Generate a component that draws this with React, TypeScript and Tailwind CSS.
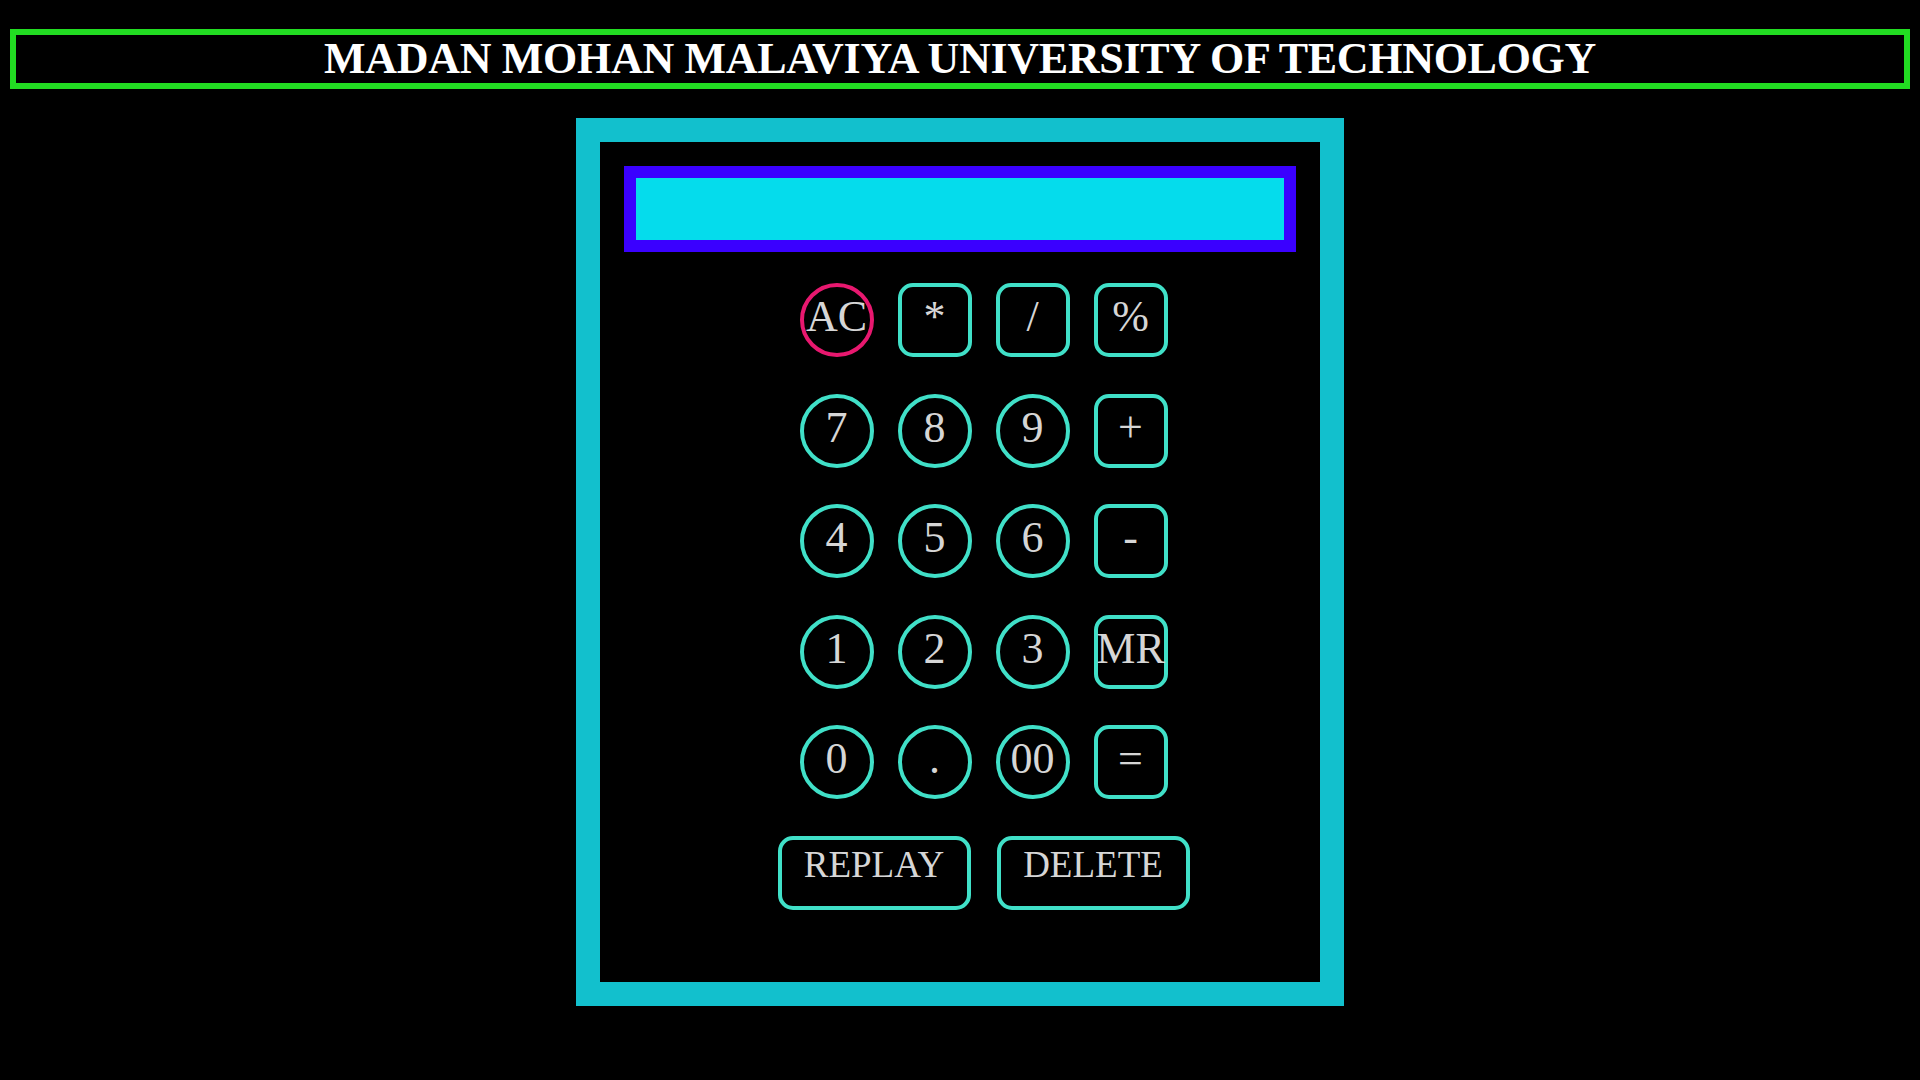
import React from "react";

type Btn = { label: string; shape: "circle" | "square"; accent?: boolean };

const rows: Btn[][] = [
  [
    { label: "AC", shape: "circle", accent: true },
    { label: "*", shape: "square" },
    { label: "/", shape: "square" },
    { label: "%", shape: "square" },
  ],
  [
    { label: "7", shape: "circle" },
    { label: "8", shape: "circle" },
    { label: "9", shape: "circle" },
    { label: "+", shape: "square" },
  ],
  [
    { label: "4", shape: "circle" },
    { label: "5", shape: "circle" },
    { label: "6", shape: "circle" },
    { label: "-", shape: "square" },
  ],
  [
    { label: "1", shape: "circle" },
    { label: "2", shape: "circle" },
    { label: "3", shape: "circle" },
    { label: "MR", shape: "square" },
  ],
  [
    { label: "0", shape: "circle" },
    { label: ".", shape: "circle" },
    { label: "00", shape: "circle" },
    { label: "=", shape: "square" },
  ],
];

function Key({ b }: { b: Btn }) {
  const shape = b.shape === "circle" ? "rounded-full" : "rounded-[15px]";
  const border = b.accent ? "border-[#e8186f]" : "border-[#40e0c8]";
  return (
    <button
      className={`${shape} ${border} w-[74px] h-[74px] border-[4px] bg-black flex items-center justify-center pb-[6px] text-[44px] leading-none text-[#d6d6d6] whitespace-nowrap overflow-visible`}
      style={{ fontFamily: '"Liberation Serif", "Times New Roman", serif' }}
    >
      {b.label}
    </button>
  );
}

export default function App() {
  return (
    <div
      className="min-h-[1080px] w-full bg-black pt-[29px] px-[10px]"
      style={{ fontFamily: '"Liberation Serif", "Times New Roman", serif' }}
    >
      <div className="h-[60px] border-[6px] border-[#22dc22] flex items-center justify-center">
        <h1 className="text-[44px] font-bold text-white leading-none tracking-[-0.3px] whitespace-nowrap">
          MADAN MOHAN MALAVIYA UNIVERSITY OF TECHNOLOGY
        </h1>
      </div>

      <div className="mt-[29px] mx-auto w-[768px] h-[888px] border-[24px] border-[#12c0cd] bg-black px-[24px] pt-[24px]">
        <div className="h-[86px] border-[12px] border-[#3a00ff] bg-[#05dcec]" />

        <div className="mt-[31px] flex flex-col items-center pl-[47px]">
          <div className="grid grid-cols-4 gap-x-[24px] gap-y-[36.5px]">
            {rows.flat().map((b, i) => (
              <Key key={i} b={b} />
            ))}
          </div>
          <div className="mt-[36.5px] flex gap-[26px]">
            {["REPLAY", "DELETE"].map((t) => (
              <button
                key={t}
                className="w-[193px] h-[74px] border-[4px] border-[#40e0c8] rounded-[15px] bg-black flex items-center justify-center pb-[17px] text-[37px] leading-none text-[#d6d6d6]"
                style={{ fontFamily: '"Liberation Serif", "Times New Roman", serif' }}
              >
                {t}
              </button>
            ))}
          </div>
        </div>
      </div>
    </div>
  );
}
